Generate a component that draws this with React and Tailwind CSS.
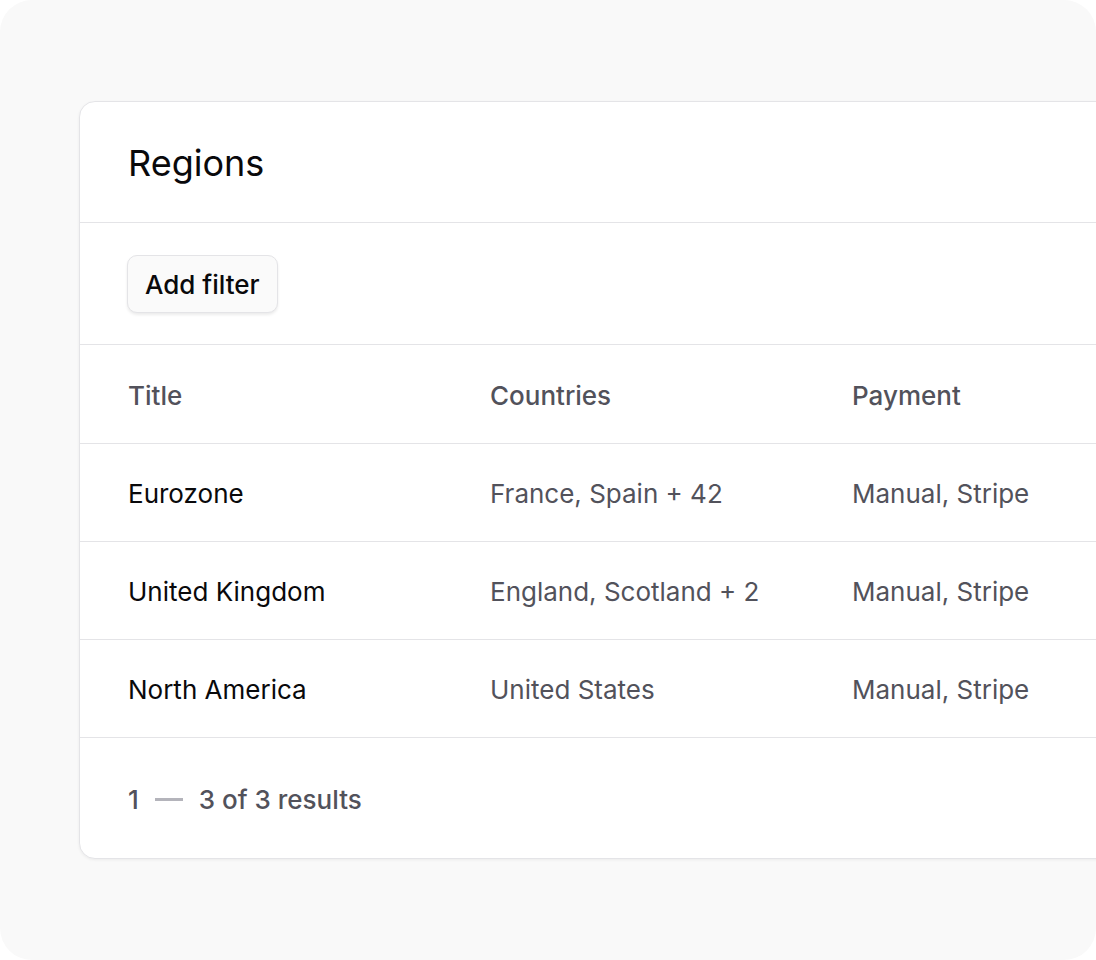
import React from 'react';

const regions = [
    { title: 'Eurozone', countries: 'France, Spain + 42', payment: 'Manual, Stripe' },
    { title: 'United Kingdom', countries: 'England, Scotland + 2', payment: 'Manual, Stripe' },
    { title: 'North America', countries: 'United States', payment: 'Manual, Stripe' },
];

export default function App() {
    return (
        <div className="w-[1096px] h-[960px] bg-white" style={{ fontFamily: 'Inter, "Noto Sans", sans-serif' }}>
            <div className="w-full h-full bg-[#f9f9f9] rounded-[32px] overflow-hidden pl-[79px] pt-[101px]">
                <div className="w-[1120px] bg-white border border-[#e4e4e7] rounded-[16px] shadow-[0_1px_3px_rgba(0,0,0,0.06)]">
                    <div className="px-[48px] pt-[41px] pb-[39px] border-b border-[#e4e4e7]">
                        <h1 className="text-[36px] leading-[40px] font-normal text-[#09090b]">Regions</h1>
                    </div>

                    <div className="px-[47px] pt-[32px] pb-[31px] border-b border-[#e4e4e7]">
                        <button className="h-[58px] px-[17px] rounded-[10px] border border-[#e4e4e7] bg-[#fafafa] shadow-[0_2px_3px_rgba(0,0,0,0.08)] text-[26px] font-medium text-[#09090b]">
                            Add filter
                        </button>
                    </div>

                    <table className="w-full table-fixed text-[26px] leading-[32px]">
                        <colgroup>
                            <col className="w-[362px]" />
                            <col className="w-[362px]" />
                            <col />
                        </colgroup>
                        <thead>
                            <tr className="border-b border-[#e4e4e7] h-[98px]">
                                <th className="pl-[48px] pt-[4px] text-left font-medium text-[#52525b]">Title</th>
                                <th className="pl-[48px] pt-[4px] text-left font-medium text-[#52525b]">Countries</th>
                                <th className="pl-[48px] pt-[4px] text-left font-medium text-[#52525b]">Payment</th>
                            </tr>
                        </thead>
                        <tbody>
                            {regions.map((r) => (
                                <tr key={r.title} className="border-b border-[#e4e4e7] h-[98px]">
                                    <td className="pl-[48px] pt-[4px] text-[#09090b]">{r.title}</td>
                                    <td className="pl-[48px] pt-[4px] text-[#52525b]">{r.countries}</td>
                                    <td className="pl-[48px] pt-[4px] text-[#52525b]">{r.payment}</td>
                                </tr>
                            ))}
                        </tbody>
                    </table>

                    <div className="h-[120px] px-[48px] pt-[4px] flex items-center text-[26px] font-medium text-[#52525b]">
                        <span>1</span>
                        <span className="mx-[16px] w-[28px] h-[3px] bg-[#b4b4bb]" />
                        <span>3 of 3 results</span>
                    </div>
                </div>
            </div>
        </div>
    );
}
